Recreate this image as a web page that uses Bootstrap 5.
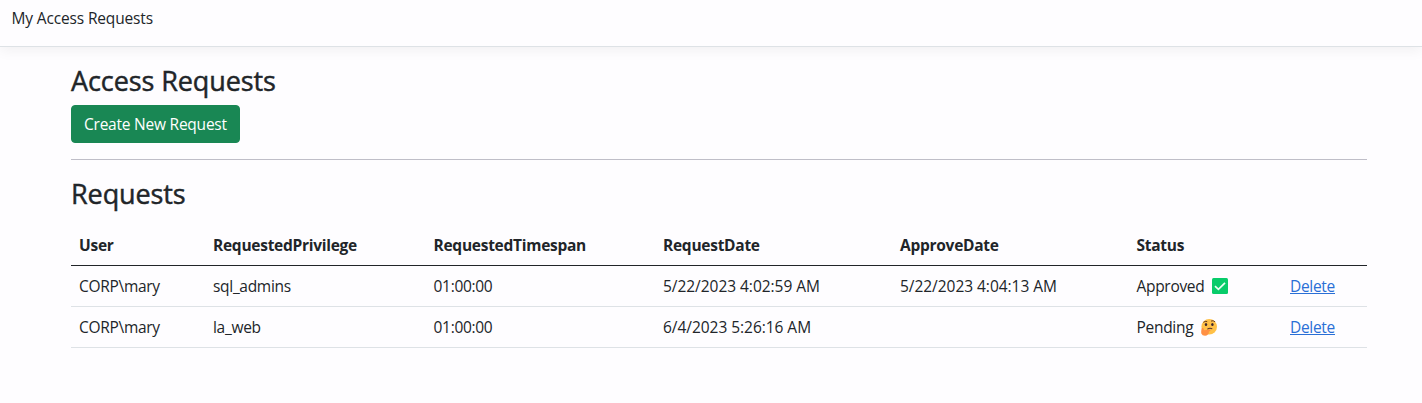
<!DOCTYPE html>
<html lang="en">
<head>
<meta charset="utf-8">
<title>My Access Requests</title>
<meta name="viewport" content="width=device-width, initial-scale=1">
<link href="https://cdn.jsdelivr.net/npm/bootstrap@5.3.0/dist/css/bootstrap.min.css" rel="stylesheet">
<style>
body{font-family:"Open Sans","Noto Sans",sans-serif;font-size:15.5px;line-height:24px;background:#fefdff;color:#212529;overflow:hidden}
.topbar{height:47px;padding:6px 11.5px 0;border-bottom:1px solid #dee2e6;box-shadow:0 4px 12px rgba(0,0,0,.05);letter-spacing:-.15px}
.page-shell{padding:17px 0 0 16px}
h1,h2{font-size:27px!important;line-height:34px!important;letter-spacing:-.1px;font-weight:500;-webkit-text-stroke:.45px #212529}
h1{margin-bottom:7px}
.btn{font-size:15.5px;line-height:24px;letter-spacing:-.23px;padding-left:12px;padding-right:12px;border-radius:4px}
.btn-success{--bs-btn-bg:#198754;--bs-btn-border-color:#198754}
hr{border-color:#8b8b9b;opacity:.55}
h2{margin-bottom:14px;padding-top:1px}
.requests{table-layout:fixed;--bs-table-bg:transparent;--bs-table-color:#212529;letter-spacing:-.3px}
.requests th{letter-spacing:-.27px;font-weight:700}
.requests .stamp{letter-spacing:-.04px}
.requests>thead>tr>th{border-bottom-color:#212529}
.requests a{color:#2a6fd6}
.status-icon{width:18px;height:18px;margin-left:3px;vertical-align:-3px}
</style>
</head>
<body>
<header class="topbar">My Access Requests</header>
<div class="page-shell">
<main class="container">
  <h1>Access Requests</h1>
  <a class="btn btn-success" role="button">Create New Request</a>
  <hr class="my-3">
  <h2>Requests</h2>
  <table class="table requests mb-0">
    <colgroup><col style="width:134px"><col style="width:220.5px"><col style="width:229.5px"><col style="width:237px"><col style="width:236.5px"><col style="width:153.5px"><col style="width:85px"></colgroup>
    <thead><tr><th>User</th><th>RequestedPrivilege</th><th>RequestedTimespan</th><th>RequestDate</th><th>ApproveDate</th><th>Status</th><th></th></tr></thead>
    <tbody>
      <tr><td>CORP\mary</td><td>sql_admins</td><td>01:00:00</td><td class="stamp">5/22/2023 4:02:59 AM</td><td class="stamp">5/22/2023 4:04:13 AM</td>
        <td>Approved <svg class="status-icon" viewBox="0 0 18 18"><rect x="1" y="1" width="16" height="16" rx="1.5" fill="#08cc6a"/><path d="M4 9.2l3.4 3.2L14 5.8" fill="none" stroke="#eafff2" stroke-width="1.7"/></svg></td>
        <td><a href="#">Delete</a></td></tr>
      <tr><td>CORP\mary</td><td>la_web</td><td>01:00:00</td><td class="stamp">6/4/2023 5:26:16 AM</td><td></td>
        <td>Pending <svg class="status-icon" viewBox="0 0 18 18"><circle cx="9.2" cy="8.7" r="7.8" fill="#ffc148"/><path d="M3.4 4.4Q5 2.8 7.2 3.6M11 3.1Q13.2 2 15 3.8" fill="none" stroke="#6b3f22" stroke-width="1"/><ellipse cx="6" cy="6.6" rx="1.2" ry="1.5" fill="#3d2830"/><ellipse cx="12.4" cy="6.6" rx="1.2" ry="1.5" fill="#3d2830"/><path d="M7.4 11.2Q9.8 9.4 12.3 10.9" fill="none" stroke="#58352a" stroke-width="1.1"/><path d="M1.8 10.2Q3 9.2 3.7 11L4.2 12.2 9.6 11.4Q11 11.6 10.4 12.8L8.8 13.7Q9.3 16.6 6.6 17.5 2.4 18.2 1.3 15.4Q.9 12.6 1.8 10.2Z" fill="#ff9044"/></svg></td>
        <td><a href="#">Delete</a></td></tr>
    </tbody>
  </table>
</main>
</div>
<script src="https://cdn.jsdelivr.net/npm/bootstrap@5.3.0/dist/js/bootstrap.bundle.min.js"></script>
</body>
</html>
